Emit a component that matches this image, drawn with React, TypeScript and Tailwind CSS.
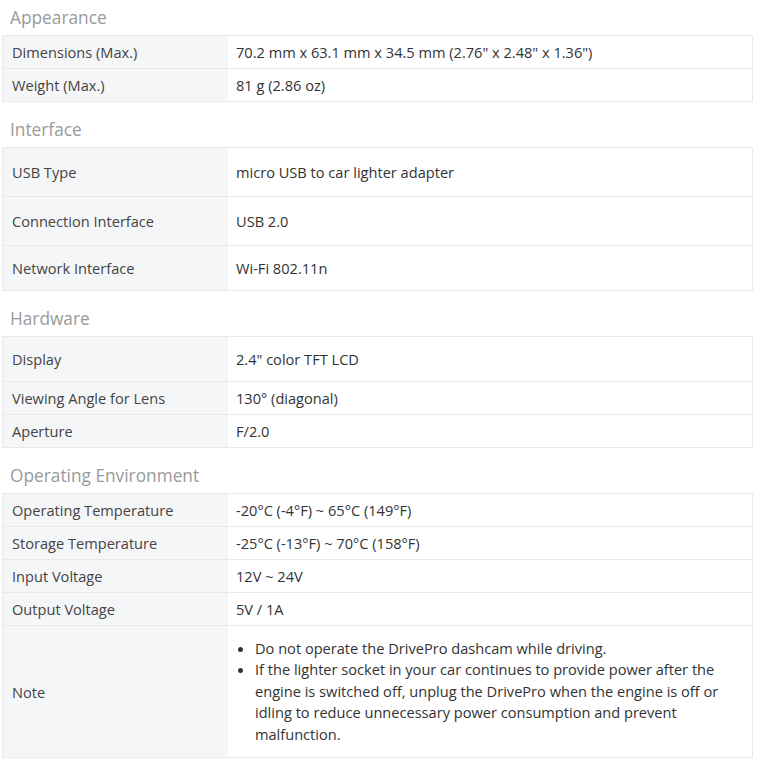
const sections = [
  {
    title: "Appearance",
    rows: [
      { label: "Dimensions (Max.)", value: "70.2 mm x 63.1 mm x 34.5 mm (2.76\" x 2.48\" x 1.36\")", h: "h-[33px]" },
      { label: "Weight (Max.)", value: "81 g (2.86 oz)", h: "h-[33px]" },
    ],
  },
  {
    title: "Interface",
    rows: [
      { label: "USB Type", value: "micro USB to car lighter adapter", h: "h-[49px]" },
      { label: "Connection Interface", value: "USB 2.0", h: "h-[49px]" },
      { label: "Network Interface", value: "Wi-Fi 802.11n", h: "h-[45px]" },
    ],
  },
  {
    title: "Hardware",
    rows: [
      { label: "Display", value: "2.4\" color TFT LCD", h: "h-[45px]" },
      { label: "Viewing Angle for Lens", value: "130° (diagonal)", h: "h-[33px]" },
      { label: "Aperture", value: "F/2.0", h: "h-[33px]" },
    ],
  },
  {
    title: "Operating Environment",
    rows: [
      { label: "Operating Temperature", value: "-20°C (-4°F) ~ 65°C (149°F)", h: "h-[33px]" },
      { label: "Storage Temperature", value: "-25°C (-13°F) ~ 70°C (158°F)", h: "h-[33px]" },
      { label: "Input Voltage", value: "12V ~ 24V", h: "h-[33px]" },
      { label: "Output Voltage", value: "5V / 1A", h: "h-[33px]" },
    ],
  },
];

const notes = [
  "Do not operate the DrivePro dashcam while driving.",
  "If the lighter socket in your car continues to provide power after the engine is switched off, unplug the DrivePro when the engine is off or idling to reduce unnecessary power consumption and prevent malfunction.",
];

// each row carries its own bottom border; the table only adds the top one
const Row = ({ label, h, children }: { label: string; h: string; children: React.ReactNode }) => (
  <div className={`grid grid-cols-[225px_1fr] border-b border-[#e9e9e9] ${h}`}>
    <div className="flex items-center bg-[#f5f6f7] pl-[9px] text-[#444]">{label}</div>
    <div className="flex items-center pl-[8px] text-[#333]">{children}</div>
  </div>
);

export default function App() {
  return (
    <div
      className="w-[759px] h-[765px] bg-white text-[14.6px] leading-[22px] overflow-hidden"
      style={{ fontFamily: '"Open Sans", "Liberation Sans", sans-serif' }}
    >
      {sections.map((s, i) => (
        <div key={s.title}>
          <h3
            className={`flex items-center pl-[10px] text-[17.3px] text-[#9a9a9a] font-normal ${
              i > 0 ? "mt-[10px] h-[35px]" : "h-[35px]"
            }`}
          >
            {s.title}
          </h3>
          <div className="ml-[2px] w-[751px] border-x border-t border-[#e9e9e9]">
            {s.rows.map((r) => (
              <Row key={r.label} label={r.label} h={r.h}>
                {r.value}
              </Row>
            ))}
            {s.title === "Operating Environment" && (
              <Row label="Note" h="h-[132px]">
                <ul className="list-disc pl-[19px] pr-[8px] leading-[21.6px] text-[#333]">
                  {notes.map((n) => (
                    <li key={n}>{n}</li>
                  ))}
                </ul>
              </Row>
            )}
          </div>
        </div>
      ))}
    </div>
  );
}
